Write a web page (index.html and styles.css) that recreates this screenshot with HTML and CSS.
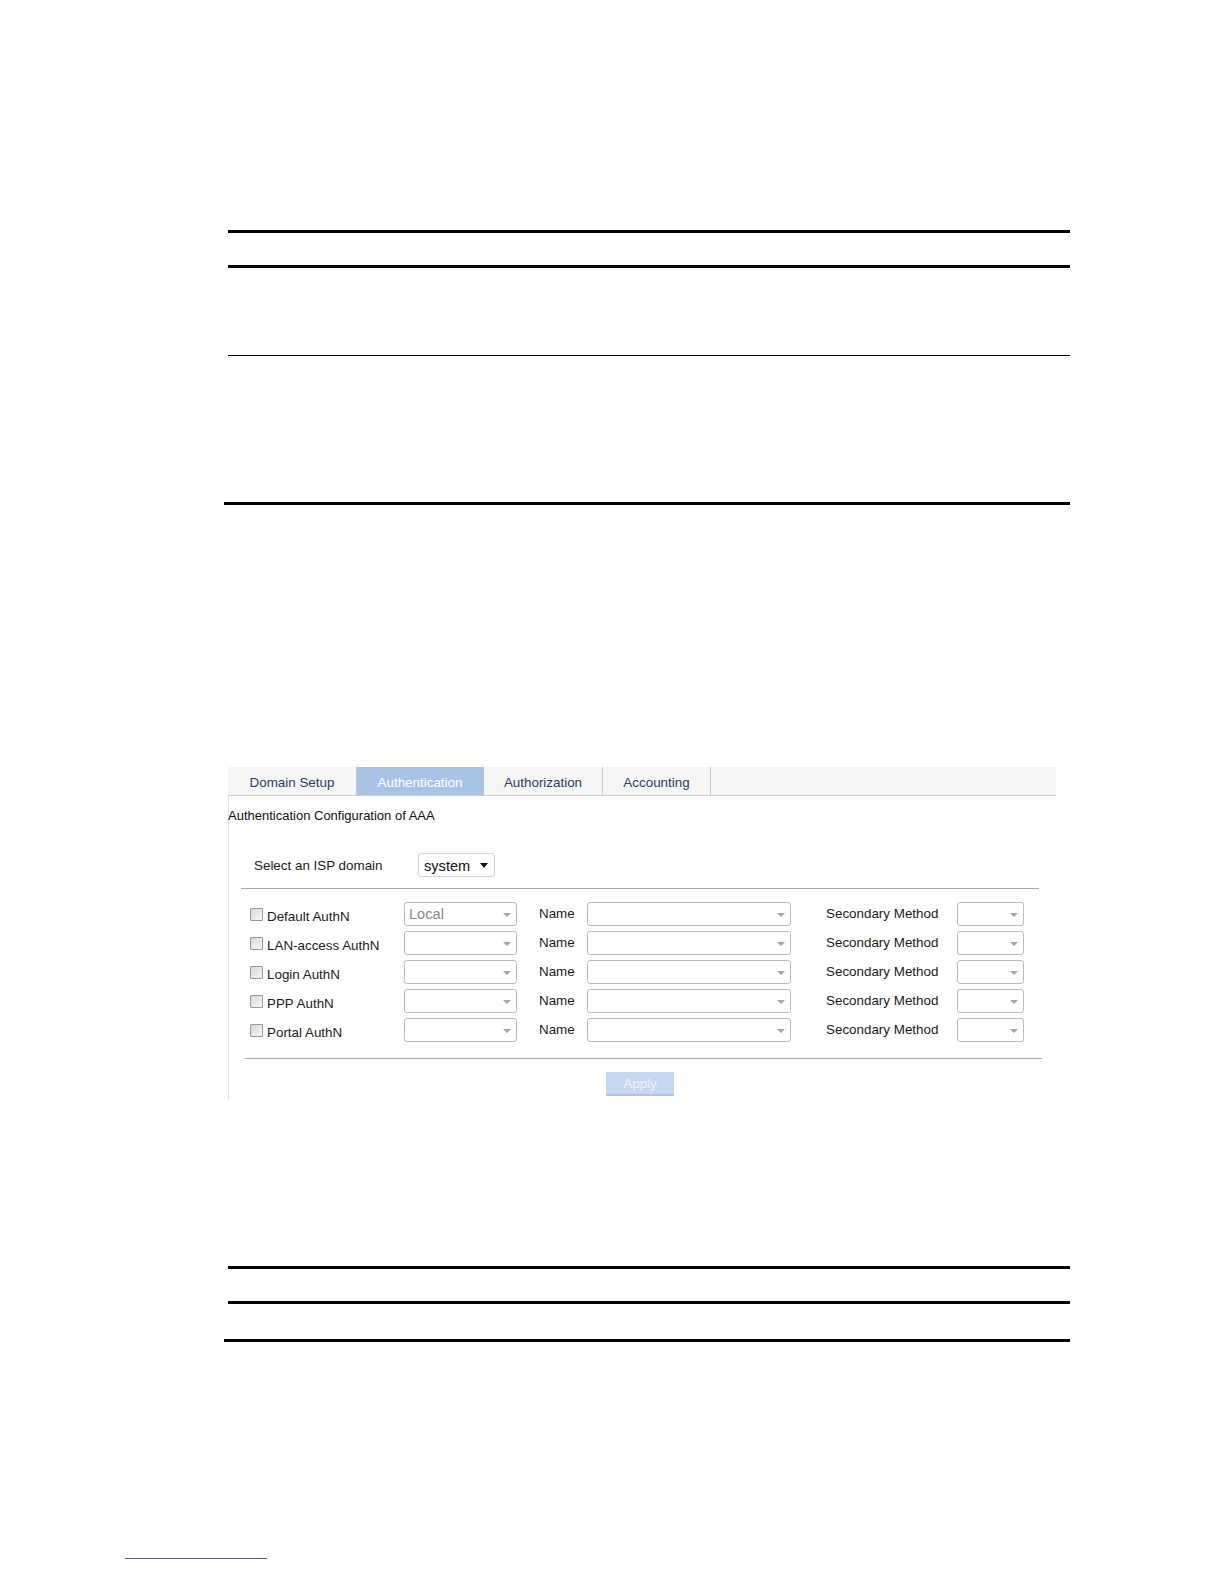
FILE: index.html
```html
<!DOCTYPE html>
<html>
<head>
<meta charset="utf-8">
<link rel="stylesheet" href="styles.css">
</head>
<body>
<div class="page">
  <div class="doc-table first">
    <div class="t-rule thick t-head"></div>
    <div class="t-rule thick t-body1"></div>
    <div class="t-rule thin t-body2"></div>
    <div class="t-rule thick wide"></div>
  </div>

  <div class="ui">
    <div class="tabs">
      <div class="tab w1">Domain Setup</div>
      <div class="tab w2 active">Authentication</div>
      <div class="tab w3">Authorization</div>
      <div class="tab w4">Accounting</div>
    </div>
    <div class="panel">
      <div class="title">Authentication Configuration of AAA</div>
      <div class="isp-row">
        <span class="isp-label">Select an ISP domain</span>
        <span class="isp-select">system<span class="arrow-dark"></span></span>
      </div>
      <div class="hr hr1"></div>
      <div class="rows">
        <div class="cell"><span class="cb"></span>Default AuthN</div>
        <div class="cell"><span class="sel s1 txt">Local<span class="arrow"></span></span></div>
        <div class="cell lbl">Name</div>
        <div class="cell"><span class="sel s2"><span class="arrow"></span></span></div>
        <div class="cell lbl">Secondary Method</div>
        <div class="cell"><span class="sel s3"><span class="arrow"></span></span></div>

        <div class="cell"><span class="cb"></span>LAN-access AuthN</div>
        <div class="cell"><span class="sel s1"><span class="arrow"></span></span></div>
        <div class="cell lbl">Name</div>
        <div class="cell"><span class="sel s2"><span class="arrow"></span></span></div>
        <div class="cell lbl">Secondary Method</div>
        <div class="cell"><span class="sel s3"><span class="arrow"></span></span></div>

        <div class="cell"><span class="cb"></span>Login AuthN</div>
        <div class="cell"><span class="sel s1"><span class="arrow"></span></span></div>
        <div class="cell lbl">Name</div>
        <div class="cell"><span class="sel s2"><span class="arrow"></span></span></div>
        <div class="cell lbl">Secondary Method</div>
        <div class="cell"><span class="sel s3"><span class="arrow"></span></span></div>

        <div class="cell"><span class="cb"></span>PPP AuthN</div>
        <div class="cell"><span class="sel s1"><span class="arrow"></span></span></div>
        <div class="cell lbl">Name</div>
        <div class="cell"><span class="sel s2"><span class="arrow"></span></span></div>
        <div class="cell lbl">Secondary Method</div>
        <div class="cell"><span class="sel s3"><span class="arrow"></span></span></div>

        <div class="cell"><span class="cb"></span>Portal AuthN</div>
        <div class="cell"><span class="sel s1"><span class="arrow"></span></span></div>
        <div class="cell lbl">Name</div>
        <div class="cell"><span class="sel s2"><span class="arrow"></span></span></div>
        <div class="cell lbl">Secondary Method</div>
        <div class="cell"><span class="sel s3"><span class="arrow"></span></span></div>
      </div>
      <div class="hr hr2"></div>
      <div class="btn-row"><span class="apply">Apply</span></div>
    </div>
  </div>

  <div class="doc-table second">
    <div class="t-rule thick t-h2"></div>
    <div class="t-rule thick t-b2"></div>
    <div class="t-rule thick wide"></div>
  </div>

  <div class="footnote-rule"></div>
</div>
</body>
</html>
```

FILE: styles.css
```css
html, body {
  margin: 0;
  padding: 0;
  background: #ffffff;
}
body {
  font-family: "Liberation Sans", Arial, sans-serif;
  font-size: 13.4px;
  color: #1c1c1c;
}
.page {
  width: 1224px;
  height: 1584px;
  overflow: hidden;
}

/* document table rules */
.doc-table {
  margin-left: 228px;
  width: 842px;
}
.doc-table.first {
  padding-top: 230px;
}
.t-rule {
  border-top: 3px solid #000;
}
.t-rule.thin {
  border-top: 1.5px solid #000;
}
.t-rule.wide {
  margin-left: -4px;
}
.t-head { height: 32px; }
.t-body1 { height: 87px; }
.t-body2 { height: 145.5px; }

.doc-table.second {
  margin-top: 166px;
}
.t-h2 { height: 32px; }
.t-b2 { height: 35px; }

.footnote-rule {
  margin-top: 216px;
  margin-left: 125px;
  width: 142px;
  border-top: 1px solid #50608c;
}

/* web UI screenshot */
.ui {
  margin-top: 262px;
  margin-left: 228px;
  width: 828px;
}
.tabs {
  display: flex;
  height: 28px;
  background: #f5f5f5;
  border-bottom: 1px solid #cfcfcf;
}
.tab {
  display: flex;
  align-items: center;
  justify-content: center;
  height: 28px;
  border-right: 1px solid #c9c9c9;
  color: #2c3f6c;
  font-size: 13.4px;
  padding-top: 4px;
  box-sizing: border-box;
}
.tab.w1 { width: 129px; }
.tab.w2 { width: 127px; }
.tab.w3 { width: 119px; }
.tab.w4 { width: 108px; }
.tab.active {
  background: #a9c3e7;
  color: #ffffff;
  border-right-color: #a9c3e7;
}

.panel {
  border-left: 1px solid #e2e2e2;
  height: 304px;
  padding-top: 12px;
  box-sizing: border-box;
}
.title {
  height: 16px;
  line-height: 16px;
  font-size: 13px;
  color: #111;
  margin-left: -1px;
}
.isp-row {
  display: flex;
  align-items: center;
  margin-top: 29px;
  margin-left: 25px;
  height: 25px;
}
.isp-label {
  width: 164px;
  padding-top: 1px;
}
.isp-select {
  display: flex;
  align-items: center;
  width: 77px;
  height: 24px;
  box-sizing: border-box;
  border: 1px solid #d4d4d4;
  border-radius: 3px;
  padding-left: 5px;
  padding-top: 2px;
  font-size: 14.6px;
  color: #111;
  position: relative;
}
.arrow-dark {
  position: absolute;
  right: 6px;
  top: 9px;
  width: 0;
  height: 0;
  border-left: 4px solid transparent;
  border-right: 4px solid transparent;
  border-top: 5px solid #111;
}

.hr {
  border-top: 1px solid #a8a8a8;
}
.hr1 {
  margin-top: 10px;
  margin-left: 12px;
  width: 798px;
}
.hr2 {
  margin-top: 12px;
  margin-left: 16px;
  width: 797px;
}

.rows {
  display: grid;
  grid-template-columns: 154px 135px 48px 239px 131px 67px;
  grid-auto-rows: 29px;
  margin-top: 12px;
  margin-left: 21px;
}
.cell {
  display: flex;
  align-items: center;
  white-space: nowrap;
  padding-top: 2px;
  box-sizing: border-box;
}
.cell.lbl {
  padding-top: 0;
  padding-bottom: 3px;
}
.cb {
  display: inline-block;
  width: 11px;
  height: 11px;
  border: 1px solid #9a9a9a;
  background: linear-gradient(135deg, #d8d8d8, #f7f7f7);
  margin-right: 4px;
  margin-top: -4px;
  border-radius: 1px;
}
.sel {
  display: flex;
  align-items: center;
  height: 24px;
  box-sizing: border-box;
  border: 1px solid #bdbdbd;
  border-radius: 3px;
  background: #fff;
  position: relative;
  margin-top: -4px;
}
.sel.txt {
  padding-left: 4px;
  color: #8a8a8a;
  font-size: 14.6px;
}
.s1 { width: 113px; }
.s2 { width: 204px; }
.s3 { width: 67px; }
.arrow {
  position: absolute;
  right: 5px;
  top: 10px;
  width: 0;
  height: 0;
  border-left: 4px solid transparent;
  border-right: 4px solid transparent;
  border-top: 4px solid #a5a5a5;
}

.btn-row {
  display: flex;
  margin-top: 13px;
  margin-left: 377px;
}
.apply {
  display: flex;
  align-items: center;
  justify-content: center;
  width: 68px;
  height: 24px;
  box-sizing: border-box;
  background: #c6d8f1;
  border-bottom: 2px solid #aec6e6;
  color: #eef2f8;
  font-size: 13.4px;
  padding-top: 2px;
}
```
